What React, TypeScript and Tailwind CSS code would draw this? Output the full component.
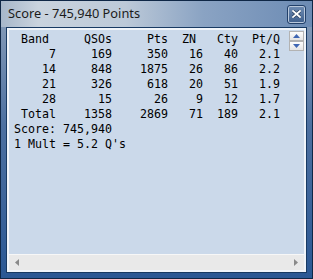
const ROWS = [
  ["7", "169", "350", "16", "40", "2.1"],
  ["14", "848", "1875", "26", "86", "2.2"],
  ["21", "326", "618", "20", "51", "1.9"],
  ["28", "15", "26", "9", "12", "1.7"],
  ["Total", "1358", "2869", "71", "189", "2.1"],
];

const WIDTHS = [6, 8, 8, 5, 5, 6];

function fmt(row: string[]) {
  return row.map((c, i) => c.padStart(WIDTHS[i])).join("");
}

const LINES = [
  " Band     QSOs     Pts  ZN   Cty  Pt/Q",
  ...ROWS.map(fmt),
  "Score: 745,940",
  "1 Mult = 5.2 Q's",
];

function SpinButton({ up }: { up?: boolean }) {
  return (
    <div className="w-[15px] h-[10px] border border-[#b3b3b3] bg-[linear-gradient(to_bottom,#fdfdfd,#e4e4e4)] flex items-center justify-center">
      <svg width="7" height="4" viewBox="0 0 7 4">
        <path d={up ? "M0 4 L3.5 0 L7 4 Z" : "M0 0 L7 0 L3.5 4 Z"} fill="#3f66b3" />
      </svg>
    </div>
  );
}

export default function App() {
  return (
    <div className="w-[313px] h-[279px] flex flex-col border border-[#0f2746] bg-[linear-gradient(to_bottom,#8ea2bc,#4d70a0_45%,#2b5894)]">
      <div className="h-[26px] shrink-0 flex items-center pl-[7px] pr-[6px] bg-[linear-gradient(to_right,#a7b7ca,#c9d3de_12%,#bcc9d8_40%,#8aa3c3_65%,#6c8bb4)]">
        <span className="text-[12.8px] text-[#1b1b1b] font-['Noto_Sans',sans-serif]">Score - 745,940 Points</span>
        <div className="ml-auto w-[19px] h-[19px] rounded-[3px] border border-[#22406a] bg-[linear-gradient(to_bottom,#6f8cb3,#3f5f8c)] shadow-[inset_0_0_0_1px_#b9c8dc] flex items-center justify-center">
          <svg width="9" height="8" viewBox="0 0 9 8">
            <path d="M1 1 L8 7 M8 1 L1 7" stroke="#2a3f5e" strokeWidth="3.2" strokeLinecap="square" />
            <path d="M1 1 L8 7 M8 1 L1 7" stroke="#ffffff" strokeWidth="1.8" strokeLinecap="square" />
          </svg>
        </div>
      </div>
      <div className="flex-1 flex px-[5px] pb-[5px]">
        <div className="flex-1 flex border border-[#183a63]">
          <div className="flex-1 flex flex-col border-2 border-[#f1f5fa]">
            <div className="relative flex-1 bg-[#cbd9ea] pl-[5px] pt-[2px] font-['DejaVu_Sans_Mono',monospace] text-[11.63px] leading-[15px] text-black">
              {LINES.map((l, i) => (
                <div key={i} className="whitespace-pre">{l}</div>
              ))}
              <div className="absolute top-[1px] right-0 flex flex-col">
                <SpinButton up />
                <SpinButton />
              </div>
            </div>
            <div className="h-[16px] shrink-0 border-t border-[#f7f7f7] bg-[#e9e9e9] flex items-center justify-between px-[6px]">
              <svg width="4" height="7" viewBox="0 0 4 7">
                <path d="M4 0 L0 3.5 L4 7 Z" fill="#8a8a8a" />
              </svg>
              <svg width="4" height="7" viewBox="0 0 4 7">
                <path d="M0 0 L4 3.5 L0 7 Z" fill="#8a8a8a" />
              </svg>
            </div>
          </div>
        </div>
      </div>
    </div>
  );
}
